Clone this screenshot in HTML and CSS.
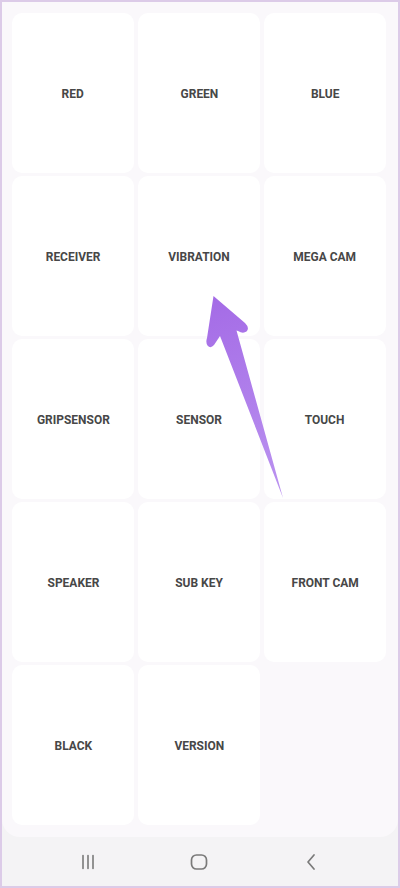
FILE: index.html
```html
<!DOCTYPE html>
<html>
<head>
<meta charset="utf-8">
<link rel="stylesheet" href="styles.css">
</head>
<body>
<div class="frame">
  <main class="content">
    <div class="grid">
      <div class="card"><span class="label">RED</span></div>
      <div class="card"><span class="label">GREEN</span></div>
      <div class="card"><span class="label">BLUE</span></div>
      <div class="card"><span class="label">RECEIVER</span></div>
      <div class="card"><span class="label">VIBRATION</span></div>
      <div class="card"><span class="label">MEGA CAM</span></div>
      <div class="card"><span class="label">GRIPSENSOR</span></div>
      <div class="card"><span class="label">SENSOR</span></div>
      <div class="card"><span class="label">TOUCH</span></div>
      <div class="card"><span class="label">SPEAKER</span></div>
      <div class="card"><span class="label">SUB KEY</span></div>
      <div class="card"><span class="label">FRONT CAM</span></div>
      <div class="card"><span class="label">BLACK</span></div>
      <div class="card"><span class="label">VERSION</span></div>
    </div>
  </main>
  <nav class="navbar">
    <svg class="nav-icon" width="20" height="20" viewBox="0 0 20 20">
      <path d="M5 3.5v13M10 3.5v13M15 3.5v13" stroke="#7a7a7a" stroke-width="1.6" fill="none" stroke-linecap="round"/>
    </svg>
    <svg class="nav-icon" width="20" height="20" viewBox="0 0 20 20">
      <rect x="2.5" y="3" width="15" height="14" rx="5" ry="5" stroke="#7a7a7a" stroke-width="1.7" fill="none"/>
    </svg>
    <svg class="nav-icon" width="20" height="20" viewBox="0 0 20 20">
      <path d="M14 3l-6 7 6 7" stroke="#7a7a7a" stroke-width="1.7" fill="none" stroke-linecap="round" stroke-linejoin="round"/>
    </svg>
  </nav>
  <svg class="arrow" width="400" height="888" viewBox="0 0 400 888">
    <defs>
      <linearGradient id="ag" x1="213" y1="296" x2="283" y2="498" gradientUnits="userSpaceOnUse">
        <stop offset="0" stop-color="#a46be6"/>
        <stop offset="1" stop-color="#bb93f0"/>
      </linearGradient>
    </defs>
    <path d="M213.5 296 L245 323 Q250 328 246.5 331.5 Q243 334 238 331 L236.5 330.5 L283 498 L220 336 L214 345 Q210.5 349 207.5 345.5 Q205.5 342.5 207 338 Z" fill="url(#ag)"/>
  </svg>
</div>
</body>
</html>
```

FILE: styles.css
```css
html, body {
  margin: 0;
  padding: 0;
  background: #f4f3f5;
}

.frame {
  position: relative;
  width: 400px;
  height: 888px;
  box-sizing: border-box;
  border: 2px solid #dccbe8;
  background: #f4f3f5;
  display: flex;
  flex-direction: column;
  overflow: hidden;
}

.content {
  background: #faf8fb;
  border-radius: 0 0 18px 18px;
  padding: 11px 12px 12px 10px;
}

.grid {
  display: grid;
  grid-template-columns: repeat(3, 122px);
  grid-auto-rows: 160px;
  column-gap: 4px;
  row-gap: 3px;
}

.card {
  background: #ffffff;
  border-radius: 10px;
  display: flex;
  align-items: center;
  justify-content: center;
}

.label {
  display: inline-block;
  font-family: Roboto, "Liberation Sans", sans-serif;
  font-weight: 700;
  font-size: 13.6px;
  line-height: 1;
  color: #474747;
  transform: scaleX(0.88);
  white-space: nowrap;
  padding-top: 2px;
}

.navbar {
  flex: 1;
  display: flex;
  align-items: center;
  justify-content: space-between;
  padding: 0 78px 0 76px;
}

.nav-icon {
  display: block;
}

.arrow {
  position: absolute;
  left: -2px;
  top: -2px;
  pointer-events: none;
}
```
